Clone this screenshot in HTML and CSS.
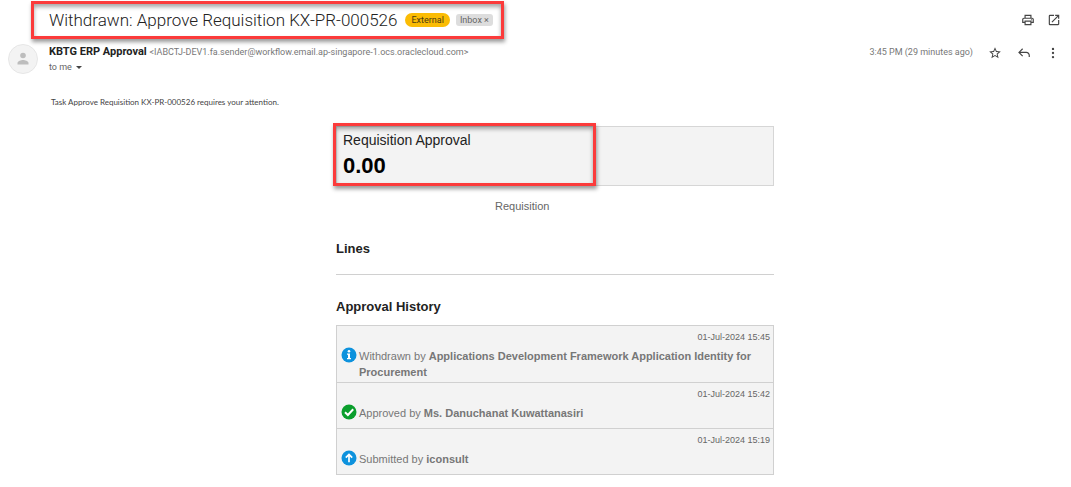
FILE: index.html
```html
<!DOCTYPE html>
<html lang="en">
<head>
  <meta charset="UTF-8">
  <meta name="viewport" content="width=device-width, initial-scale=1.0">
  <title>Withdrawn: Approve Requisition KX-PR-000526</title>
  <link rel="stylesheet" href="styles.css">
</head>
<body>
  <header class="subject-bar">
    <div class="subject marked">
      <h1>Withdrawn: Approve Requisition KX-PR-000526</h1>
      <span class="tag-external">External</span>
      <span class="tag-inbox">Inbox <button type="button" aria-label="Remove label Inbox">×</button></span>
    </div>
    <div class="actions">
      <button type="button" aria-label="Print all">
        <svg viewBox="0 0 24 24"><path d="M19 8h-1V3H6v5H5c-1.660 0-3 1.340-3 3v6h4v4h12v-4h4v-6c0-1.660-1.340-3-3-3zM8 5h8v3H8V5zm8 14H8v-4h8v4zm2-4v-2H6v2H4v-4c0-.55.45-1 1-1h14c.55 0 1 .45 1 1v4h-2z"/><circle cx="18" cy="11.500" r="1"/></svg>
      </button>
      <button type="button" aria-label="Open in new window">
        <svg viewBox="0 0 24 24"><path d="M19 19H5V5h7V3H5a2 2 0 0 0-2 2v14a2 2 0 0 0 2 2h14c1.100 0 2-.9 2-2v-7h-2v7zM14 3v2h3.590l-9.830 9.830 1.410 1.410L19 6.410V10h2V3h-7z"/></svg>
      </button>
    </div>
  </header>

  <section class="sender">
    <svg class="avatar" viewBox="0 0 30 30" aria-hidden="true">
      <circle cx="15" cy="15" r="14.500" fill="#f3f3f3" stroke="#e6e6e6"/>
      <circle cx="15" cy="11.500" r="2.800" fill="#bdbdbd"/>
      <path d="M9.500 20.500v-1.600c0-2 3.600-3 5.500-3s5.500 1 5.500 3v1.600z" fill="#bdbdbd"/>
    </svg>
    <div class="sender-info">
      <div><strong>KBTG ERP Approval</strong> <span class="address">&lt;IABCTJ-DEV1.fa.sender@workflow.email.ap-singapore-1.ocs.oraclecloud.com&gt;</span></div>
      <button type="button" class="to-me">to me <span class="caret"></span></button>
    </div>
    <time class="received">3:45 PM (29 minutes ago)</time>
    <div class="actions">
      <button type="button" aria-label="Star">
        <svg viewBox="0 0 24 24"><path d="M22 9.240l-7.190-.62L12 2 9.190 8.630 2 9.240l5.460 4.730L5.820 21 12 17.270 18.180 21l-1.630-7.030L22 9.240zM12 15.400l-3.760 2.270 1-4.280-3.320-2.880 4.380-.38L12 6.100l1.710 4.040 4.380.38-3.320 2.880 1 4.280L12 15.400z"/></svg>
      </button>
      <button type="button" aria-label="Reply">
        <svg viewBox="0 0 24 24"><path d="M9 4L2 11l7 7 1.400-1.400L5.800 12H16c2.200 0 4 1.800 4 4v3h2v-3c0-3.300-2.700-6-6-6H5.800l4.600-4.600z"/></svg>
      </button>
      <button type="button" aria-label="More">
        <svg viewBox="0 0 24 24"><circle cx="12" cy="5" r="2"/><circle cx="12" cy="12" r="2"/><circle cx="12" cy="19" r="2"/></svg>
      </button>
    </div>
  </section>

  <main class="message">
    <p class="intro">Task Approve Requisition KX-PR-000526 requires your attention.</p>

    <div class="content">
      <div class="summary">
        <div class="summary-main marked">
          <div class="summary-title">Requisition Approval</div>
          <div class="amount">0.00</div>
        </div>
      </div>
      <p class="caption">Requisition</p>

      <h2>Lines</h2>
      <hr>

      <h2>Approval History</h2>
      <ul class="history">
        <li>
          <time>01-Jul-2024 15:45</time>
          <div class="entry">
            <svg viewBox="0 0 16 16" aria-hidden="true"><circle cx="8" cy="8" r="7.500" fill="#0d92dd"/><circle cx="8" cy="4.300" r="1.300" fill="#fff"/><path d="M6 6.500h3v4.500h1v1.300H6V11h1V7.800H6z" fill="#fff"/></svg>
            <p>Withdrawn by <strong>Applications Development Framework Application Identity for Procurement</strong></p>
          </div>
        </li>
        <li>
          <time>01-Jul-2024 15:42</time>
          <div class="entry">
            <svg viewBox="0 0 16 16" aria-hidden="true"><circle cx="8" cy="8" r="7.500" fill="#0a9e2c"/><path d="M4 8.200l2.900 2.800L12.200 5.300" fill="none" stroke="#fff" stroke-width="2"/></svg>
            <p>Approved by <strong>Ms. Danuchanat Kuwattanasiri</strong></p>
          </div>
        </li>
        <li>
          <time>01-Jul-2024 15:19</time>
          <div class="entry">
            <svg viewBox="0 0 16 16" aria-hidden="true"><circle cx="8" cy="8" r="7.500" fill="#0d92dd"/><path d="M8 12.200V5M4.800 7.700L8 4.500l3.200 3.200" fill="none" stroke="#fff" stroke-width="1.700"/></svg>
            <p>Submitted by <strong>iconsult</strong></p>
          </div>
        </li>
      </ul>
    </div>
  </main>
</body>
</html>
```
FILE: styles.css
```css
* {
  box-sizing: border-box;
}
body {
  margin: 0;
  padding: 8px 10px 12px 8px;
  background-color: #fff;
  color: #222;
  font-family: Roboto, "Liberation Sans", sans-serif;
}
h1, h2, p, ul {
  margin: 0;
  padding: 0;
}
button {
  padding: 0;
  border: none;
  background: none;
  color: inherit;
  font: inherit;
  cursor: pointer;
}

/* red callout frames */
.marked {
  position: relative;
}
.marked::after {
  content: "";
  position: absolute;
  border: 3px solid #fb3b3b;
  box-shadow: 1px 3px 4px rgba(0, 0, 0, 0.4), inset 0 3px 4px rgba(0, 0, 0, 0.35);
  pointer-events: none;
}
.subject.marked::after {
  inset: -7px -11px -7px -18px;
}
.summary-main.marked::after {
  inset: -4px -2px -1px -4px;
}

.subject-bar {
  display: flex;
  justify-content: space-between;
  align-items: center;
  padding-left: 41px;
}
.subject {
  display: flex;
  align-items: center;
  height: 24px;
}
.subject h1 {
  font-size: 17px;
  font-weight: 300;
  margin-right: 8px;
}
.tag-external {
  padding: 0 6px;
  border-radius: 8px;
  background-color: #fbbc04;
  color: #4a3a10;
  font-size: 9px;
  line-height: 14px;
  margin-right: 6px;
}
.tag-inbox {
  padding: 0 4px;
  border-radius: 3px;
  background-color: #ddd;
  color: #666;
  font-size: 9px;
  line-height: 12px;
}
.actions {
  display: flex;
  gap: 15px;
}
.actions button {
  width: 14px;
  height: 14px;
}
.actions svg {
  display: block;
  fill: #444;
}
.subject-bar .actions {
  gap: 12px;
}

.sender {
  display: flex;
  align-items: flex-start;
  padding: 12px 1px 0 0;
}
.avatar {
  width: 30px;
  height: 30px;
  margin-right: 11px;
}
.sender-info {
  flex: 1;
  font-size: 11px;
  line-height: 16px;
}
.address, .received {
  color: #777;
  font-size: 9px;
}
.to-me {
  display: block;
  color: #666;
  font-size: 9px;
  line-height: 14px;
}
.caret {
  display: inline-block;
  margin: 0 0 1px 2px;
  border: 3px solid transparent;
  border-top-color: #444;
  border-bottom: none;
}
.received {
  margin-right: 15px;
  line-height: 16px;
}
.sender .actions {
  padding-top: 2px;
}

.message {
  padding-left: 41px;
  font-family: "Liberation Sans", Arial, sans-serif;
}
.intro {
  padding: 22px 2px 0;
  color: #444;
  font-family: Lato, sans-serif;
  font-size: 8px;
  line-height: 12px;
}
.content {
  max-width: 438px;
  margin: 18px auto 0;
}
.summary {
  display: flex;
  border: 1px solid #d6d6d6;
  background-color: #f3f3f3;
}
.summary-main {
  width: 59%;
  padding: 4px 6px 2px;
}
.summary-title {
  font-size: 14px;
  line-height: 18px;
}
.amount {
  color: #000;
  font-size: 22px;
  font-weight: bold;
  line-height: 34px;
}
.caption {
  padding-top: 12px;
  color: #666;
  font-size: 11px;
  line-height: 16px;
  text-indent: 159px;
}
h2 {
  padding-top: 26px;
  font-size: 13px;
  line-height: 18px;
}
hr {
  margin: 16px 0 -3px;
  border: none;
  border-top: 1px solid #d0d0d0;
}
.history {
  margin-top: 9px;
  border: 1px solid #d0d0d0;
  background-color: #f3f3f3;
  color: #777;
  font-size: 11px;
  list-style: none;
}
.history li {
  min-height: 46px;
  padding: 4px 3px 2px 4px;
}
.history li + li {
  border-top: 1px solid #d0d0d0;
}
.history time {
  display: block;
  color: #666;
  font-size: 9px;
  line-height: 14px;
  text-align: right;
}
.entry {
  display: flex;
  gap: 2px;
  padding-top: 3px;
}
.entry svg {
  flex: none;
  width: 16px;
  height: 16px;
}
.entry p {
  padding-top: 1px;
  line-height: 16px;
}
```
